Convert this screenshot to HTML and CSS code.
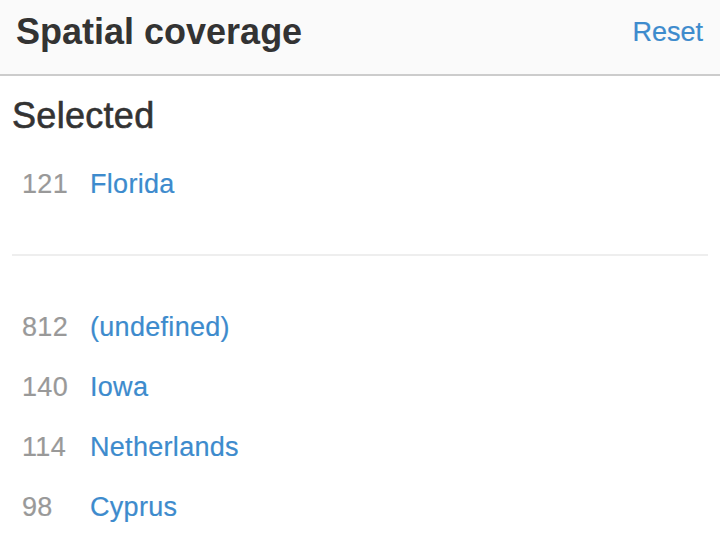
FILE: index.html
```html
<!DOCTYPE html>
<html>
<head>
<meta charset="utf-8">
<link rel="stylesheet" href="styles.css">
</head>
<body>
<div class="panel">
  <header class="panel-header">
    <h1 class="panel-title">Spatial coverage</h1>
    <a class="reset" href="#">Reset</a>
  </header>
  <div class="panel-body">
    <h2 class="section-title">Selected</h2>
    <ul class="facet-list">
      <li class="facet"><span class="count">121</span><a class="name" href="#">Florida</a></li>
    </ul>
    <hr class="divider">
    <ul class="facet-list">
      <li class="facet"><span class="count">812</span><a class="name" href="#">(undefined)</a></li>
      <li class="facet"><span class="count">140</span><a class="name" href="#">Iowa</a></li>
      <li class="facet"><span class="count">114</span><a class="name" href="#">Netherlands</a></li>
      <li class="facet"><span class="count">98</span><a class="name" href="#">Cyprus</a></li>
    </ul>
  </div>
</div>
</body>
</html>
```

FILE: styles.css
```css
html, body {
  margin: 0;
  padding: 0;
  background: #fff;
}

body {
  font-family: "Liberation Sans", Arial, sans-serif;
  color: #333;
  width: 720px;
  height: 540px;
  overflow: hidden;
}

.panel-header {
  box-sizing: content-box;
  height: 62px;
  background: #fafafa;
  border-bottom: 2px solid #cccccc;
  display: flex;
  align-items: flex-start;
  justify-content: space-between;
  padding: 12px 17px 0 16px;
}

.panel-title {
  margin: 0;
  font-size: 36px;
  line-height: 40px;
  font-weight: bold;
  color: #333;
}

.reset {
  margin-top: 0;
  font-size: 27px;
  line-height: 40px;
  color: #3d8bcd;
  text-decoration: none;
  -webkit-text-stroke: 0.2px #3d8bcd;
}

.panel-body {
  padding: 20px 12px 0 12px;
}

.section-title {
  margin: 0 0 18px 0;
  font-size: 36px;
  line-height: 40px;
  font-weight: normal;
  letter-spacing: 0.3px;
  color: #333;
  -webkit-text-stroke: 0.6px #333;
}

.facet-list {
  list-style: none;
  margin: 0;
  padding: 0;
}

.facet {
  display: flex;
  font-size: 27px;
  line-height: 60px;
  height: 60px;
  padding-left: 10px;
  letter-spacing: 0.3px;
}

.count {
  width: 68px;
  color: #999;
  -webkit-text-stroke: 0.2px #999;
}

.name {
  color: #3d8bcd;
  text-decoration: none;
  -webkit-text-stroke: 0.2px #3d8bcd;
}

.divider {
  border: 0;
  border-top: 2px solid #eeeeee;
  margin: 40px 0 41px 0;
  height: 0;
}
```
